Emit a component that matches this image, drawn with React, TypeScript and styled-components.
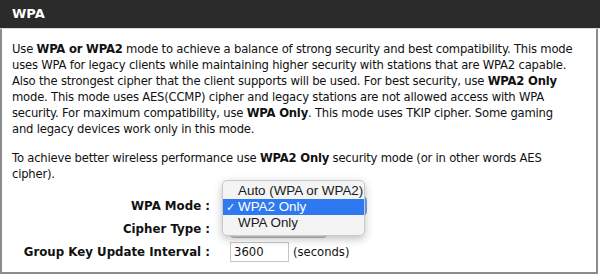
import React from 'react';
import styled, { createGlobalStyle } from 'styled-components';

const GlobalStyle = createGlobalStyle`
  html, body {
    margin: 0;
    padding: 0;
    background: #ffffff;
  }
  body {
    font-family: "DejaVu Sans", Verdana, sans-serif;
    color: #111;
  }
`;

const Panel = styled.div`
  width: 600px;
  height: 274px;
  display: flex;
  flex-direction: column;
  overflow: hidden;
`;

const Header = styled.div`
  height: 28px;
  flex: none;
  background: #2b2b2b;
  color: #ffffff;
  font-weight: bold;
  font-size: 13px;
  line-height: 28px;
  padding-left: 12px;
  border-bottom: 1px solid #d8d8d8;
`;

const Body = styled.div`
  flex: 1;
  width: 598px;
  box-sizing: border-box;
  border: 2px solid #8c8c8c;
  border-top: none;
  padding: 12px 10px 0 10px;
`;

const Paragraph = styled.p`
  margin: 0 0 13px 0;
  font-size: 11.6px;
  line-height: 16px;
  letter-spacing: -0.2px;
  white-space: nowrap;
`;

const Form = styled.div`
  display: grid;
  grid-template-columns: 198px 1fr;
  column-gap: 20px;
  row-gap: 1px;
  font-size: 11.6px;
`;

const Label = styled.div`
  font-weight: bold;
  text-align: right;
  height: 22px;
  line-height: 22px;
  font-size: 11.8px;
`;

const Field = styled.div`
  position: relative;
  display: flex;
  align-items: center;
  gap: 4px;
  height: 22px;
`;

const SelectBox = styled.div<{ $width: number; $focused?: boolean }>`
  width: ${(p) => p.$width}px;
  height: 18px;
  box-sizing: border-box;
  border-radius: 4px;
  border: 1px solid #b5b5b5;
  background: linear-gradient(#fafafa, #dcdcdc);
  box-shadow: ${(p) => (p.$focused ? '0 0 0 2px #6fa2ee' : 'none')};
`;

const TextInput = styled.div`
  width: 59px;
  height: 20px;
  box-sizing: border-box;
  border: 1px solid #c4c4c4;
  padding-left: 3px;
  line-height: 18px;
  color: #111;
`;

const Unit = styled.span``;

const Menu = styled.div`
  position: absolute;
  left: -8px;
  top: -15px;
  width: 141px;
  padding: 2px 0 4px;
  background: #f4f4f4;
  border: 1px solid #c9c9c9;
  border-radius: 5px;
  box-shadow: 0 3px 8px rgba(0, 0, 0, 0.25);
  font-family: "Liberation Sans", Arial, sans-serif;
  font-size: 13.4px;
  z-index: 2;
`;

const MenuItem = styled.div<{ $active?: boolean }>`
  position: relative;
  height: 16px;
  line-height: 16px;
  padding-left: 15px;
  color: ${(p) => (p.$active ? '#ffffff' : '#1a1a1a')};
  background: ${(p) => (p.$active ? '#2f79f0' : 'transparent')};
`;

const Check = styled.span`
  position: absolute;
  left: 3px;
  top: 0;
  font-size: 11px;
`;

const options = ['Auto (WPA or WPA2)', 'WPA2 Only', 'WPA Only'];

const App = () => {
  return (
    <Panel>
      <GlobalStyle />
      <Header>WPA</Header>
      <Body>
        <Paragraph>
          Use <b>WPA or WPA2</b> mode to achieve a balance of strong security and best compatibility. This mode
          <br />
          uses WPA for legacy clients while maintaining higher security with stations that are WPA2 capable.
          <br />
          Also the strongest cipher that the client supports will be used. For best security, use <b>WPA2 Only</b>
          <br />
          mode. This mode uses AES(CCMP) cipher and legacy stations are not allowed access with WPA
          <br />
          security. For maximum compatibility, use <b>WPA Only</b>. This mode uses TKIP cipher. Some gaming
          <br />
          and legacy devices work only in this mode.
        </Paragraph>
        <Paragraph>
          To achieve better wireless performance use <b>WPA2 Only</b> security mode (or in other words AES
          <br />
          cipher).
        </Paragraph>
        <Form>
          <Label>WPA Mode :</Label>
          <Field>
            <SelectBox $width={135} $focused />
            <Menu>
              {options.map((o) => (
                <MenuItem key={o} $active={o === 'WPA2 Only'}>
                  {o === 'WPA2 Only' && <Check>✓</Check>}
                  {o}
                </MenuItem>
              ))}
            </Menu>
          </Field>
          <Label>Cipher Type :</Label>
          <Field>
            <SelectBox $width={97} />
          </Field>
          <Label>Group Key Update Interval :</Label>
          <Field>
            <TextInput>3600</TextInput>
            <Unit>(seconds)</Unit>
          </Field>
        </Form>
      </Body>
    </Panel>
  );
};

export default App;
